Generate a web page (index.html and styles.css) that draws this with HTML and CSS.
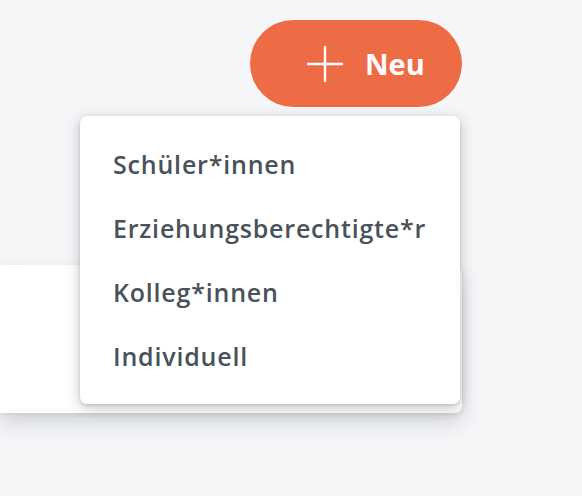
FILE: index.html
```html
<!DOCTYPE html>
<html lang="de">
<head>
<meta charset="utf-8">
<title>Neu</title>
<link rel="stylesheet" href="styles.css">
</head>
<body>
<div class="page">
  <div class="toolbar">
    <div class="dropdown">
      <button class="btn-new" type="button">
        <svg class="plus" width="36" height="36" viewBox="0 0 36 36" aria-hidden="true">
          <path d="M18 1 V35 M1 18 H35" stroke="#fff" stroke-width="2.4" stroke-linecap="round" fill="none"/>
        </svg>
        <span>Neu</span>
      </button>
      <ul class="menu">
        <li class="menu-item">Schüler*innen</li>
        <li class="menu-item">Erziehungsberechtigte*r</li>
        <li class="menu-item">Kolleg*innen</li>
        <li class="menu-item">Individuell</li>
      </ul>
    </div>
  </div>
  <div class="card"></div>
</div>
</body>
</html>
```

FILE: styles.css
```css
html, body {
  margin: 0;
  padding: 0;
}
body {
  background: #f5f6f8;
  font-family: "Open Sans", "Noto Sans", sans-serif;
  width: 582px;
  height: 496px;
  overflow: hidden;
}
.page {
  padding-top: 20px;
}
.toolbar {
  display: flex;
  justify-content: flex-end;
  padding-right: 120px;
}
.dropdown {
  position: relative;
}
.btn-new {
  display: flex;
  align-items: center;
  gap: 22px;
  height: 87px;
  width: 212px;
  padding: 0 0 0 57px;
  border: none;
  border-radius: 44px;
  background: #ee6c45;
  color: #fff;
  font-family: "Open Sans", "Noto Sans", sans-serif;
  font-weight: 700;
  font-size: 29px;
  cursor: pointer;
  box-sizing: border-box;
}
.plus {
  flex: none;
}
.menu {
  position: absolute;
  top: 96px;
  right: 2px;
  width: 380px;
  margin: 0;
  padding: 16px 0;
  list-style: none;
  background: #fff;
  border-radius: 7px;
  box-shadow: 0 4px 14px rgba(40, 45, 55, 0.28), 0 1px 3px rgba(40, 45, 55, 0.15);
  box-sizing: border-box;
  z-index: 2;
}
.menu-item {
  height: 64px;
  line-height: 64px;
  padding-left: 33px;
  font-size: 25px;
  font-weight: 600;
  letter-spacing: 0.8px;
  color: #49525a;
  white-space: nowrap;
}
.card {
  margin-top: 158px;
  width: 462px;
  height: 148px;
  background: #fff;
  border-radius: 0 7px 7px 0;
  box-shadow: 0 10px 20px rgba(40, 45, 55, 0.16), 0 2px 4px rgba(40, 45, 55, 0.08);
}
```
